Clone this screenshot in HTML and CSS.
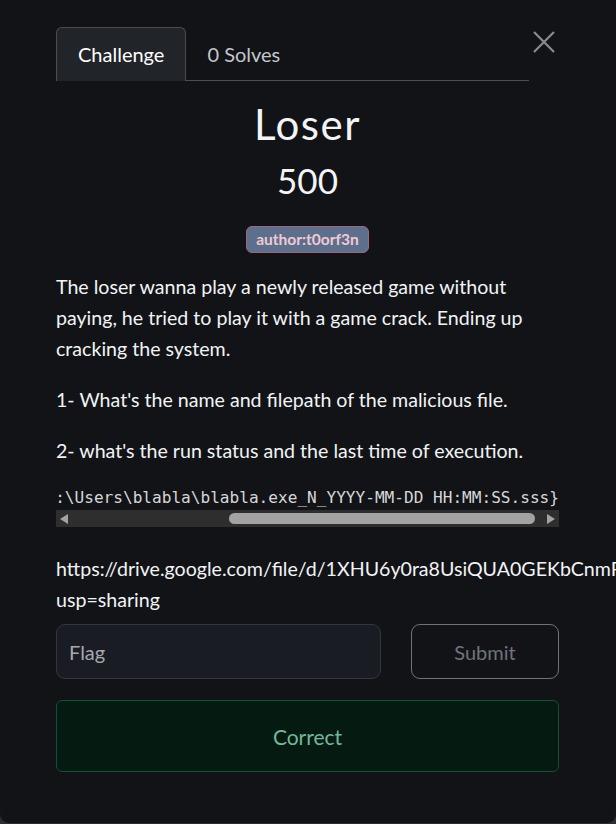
FILE: index.html
```html
<!DOCTYPE html>
<html lang="en">
<head>
<meta charset="utf-8">
<title>Loser</title>
<link rel="stylesheet" href="styles.css">
</head>
<body>
<div class="modal">
  <div class="modal-header">
    <ul class="tabs">
      <li class="tab active">Challenge</li>
      <li class="tab">0 Solves</li>
    </ul>
    <button class="close" aria-label="Close">
      <svg width="22" height="22" viewBox="0 0 22 22"><path d="M1 1 L21 21 M21 1 L1 21" stroke="#8a8b8e" stroke-width="2.2" fill="none"/></svg>
    </button>
  </div>
  <h2 class="title">Loser</h2>
  <h3 class="value">500</h3>
  <div class="tags"><span class="badge">author:t0orf3n</span></div>
  <div class="desc">
    <p>The loser wanna play a newly released game without paying, he tried to play it with a game crack. Ending up cracking the system.</p>
    <p>1- What's the name and filepath of the malicious file.</p>
    <p>2- what's the run status and the last time of execution.</p>
    <div class="code">
      <div class="code-view"><pre>Flag Format: CyCTF{C:\Users\blabla\blabla.exe_N_YYYY-MM-DD HH:MM:SS.sss}</pre></div>
      <div class="scrollbar">
        <span class="sb-btn"><span class="arrow-left"></span></span>
        <span class="sb-track"><span class="sb-thumb"></span></span>
        <span class="sb-btn"><span class="arrow-right"></span></span>
      </div>
    </div>
    <p class="link"><span class="nowrap">https://drive.google.com/file/d/1XHU6y0ra8UsiQUA0GEKbCnmR4tWb2Lx/view?</span>usp=sharing</p>
  </div>
  <form class="flag-form">
    <input class="flag-input" type="text" placeholder="Flag">
    <button class="submit" type="button">Submit</button>
  </form>
  <div class="alert">Correct</div>
</div>
</body>
</html>
```
FILE: styles.css
```css
html, body {
  margin: 0;
  padding: 0;
  background: #2c2d31;
  overflow: hidden;
}
.modal {
  box-sizing: border-box;
  width: 616px;
  height: 823px;
  background: #121317;
  border-radius: 0 0 9px 9px;
  padding: 27px 57px 0 56px;
  overflow: hidden;
  font-family: Lato, "Noto Sans", sans-serif;
  color: #f1f3f5;
}
.modal-header {
  display: flex;
  align-items: flex-start;
}
.tabs {
  list-style: none;
  margin: 0;
  padding: 0;
  flex: 1;
  display: flex;
  border-bottom: 1px solid #4a4d53;
}
.tab {
  padding: 13px 21px 13px 21px;
  font-size: 20px;
  line-height: 26px;
  color: #c3c7cc;
  border: 1px solid transparent;
  border-bottom: 0;
  margin-bottom: -1px;
  border-radius: 6px 6px 0 0;
}
.tab.active {
  color: #ffffff;
  background: #212429;
  border-color: #4a4d53;
  padding-bottom: 14px;
}
.tab + .tab {
  padding-left: 20px;
}
.close {
  width: 30px;
  height: 30px;
  margin-top: 0;
  padding: 0;
  background: none;
  border: 0;
  display: flex;
  align-items: center;
  justify-content: center;
}
.title {
  margin: 18px 0 0;
  text-align: center;
  font-size: 42px;
  font-weight: 400;
  line-height: 1.2;
  letter-spacing: 1.5px;
  color: #f3f4f6;
}
.value {
  margin: 10px 0 0;
  text-align: center;
  font-size: 35px;
  font-weight: 400;
  line-height: 1.2;
  color: #f3f4f6;
}
.tags {
  margin-top: 25px;
  text-align: center;
  line-height: 0;
}
.badge {
  display: inline-block;
  box-sizing: border-box;
  height: 27px;
  padding: 0 9px;
  line-height: 25px;
  font-size: 15.5px;
  font-weight: 700;
  color: #f4c9d3;
  background: #5c6f8c;
  border: 1px solid #a0667c;
  border-radius: 6px;
}
.desc {
  margin-top: 18px;
  font-size: 19.6px;
  line-height: 31px;
}
.desc p {
  margin: 0 0 20px;
}
.code {
  margin: 0 0 26px;
}
.code-view {
  display: flex;
  justify-content: flex-end;
  overflow: hidden;
}
.code-view pre {
  margin: 0;
  font-family: "DejaVu Sans Mono", "Liberation Mono", monospace;
  font-size: 16.1px;
  line-height: 24px;
  color: #d6d7d9;
  white-space: pre;
  flex: none;
}
.scrollbar {
  display: flex;
  height: 17px;
  background: #2e2e2f;
}
.sb-btn {
  width: 16px;
  display: flex;
  align-items: center;
  justify-content: center;
}
.arrow-left {
  width: 0;
  height: 0;
  border-top: 5.5px solid transparent;
  border-bottom: 5.5px solid transparent;
  border-right: 8px solid #a3a3a3;
}
.arrow-right {
  width: 0;
  height: 0;
  border-top: 5.5px solid transparent;
  border-bottom: 5.5px solid transparent;
  border-left: 8px solid #a3a3a3;
}
.sb-track {
  flex: 1;
  display: flex;
  align-items: center;
  justify-content: flex-end;
  padding-right: 8px;
}
.sb-thumb {
  width: 306px;
  height: 11px;
  border-radius: 6px;
  background: #a3a3a3;
}
.desc p.link {
  margin-bottom: 0;
}
.nowrap {
  white-space: nowrap;
}
.flag-form {
  display: flex;
  gap: 30px;
  margin: 9px 0 0;
}
.flag-input {
  box-sizing: border-box;
  flex: 1;
  height: 55px;
  padding: 0 12px;
  font-family: Lato, "Noto Sans", sans-serif;
  font-size: 20px;
  color: #eef0f2;
  background: #1a1c23;
  border: 1px solid #34363d;
  border-radius: 9px;
  outline: none;
}
.flag-input::placeholder {
  color: #a5a9af;
}
.submit {
  box-sizing: border-box;
  width: 148px;
  height: 55px;
  font-family: Lato, "Noto Sans", sans-serif;
  font-size: 20px;
  color: #6e747b;
  background: transparent;
  border: 1px solid #6e737a;
  border-radius: 9px;
}
.alert {
  box-sizing: border-box;
  margin-top: 21px;
  height: 72px;
  display: flex;
  align-items: center;
  justify-content: center;
  font-size: 21px;
  color: #75b798;
  background: #051b11;
  border: 1px solid #0f5132;
  border-radius: 6px;
}
```
